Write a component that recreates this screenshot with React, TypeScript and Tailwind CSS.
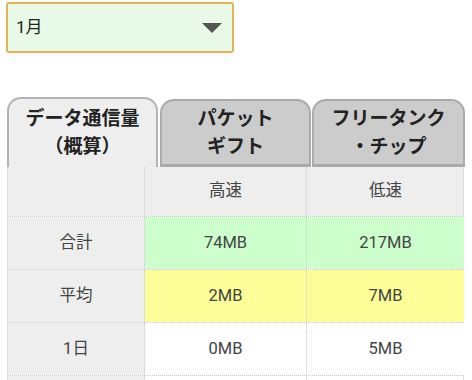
import React from "react";

const font = { fontFamily: "Roboto, 'Noto Sans CJK JP', 'Noto Sans', sans-serif" };

export default function App() {
  const rows = [
    { label: "合計", a: "74MB", b: "217MB", bg: "bg-[#ccffcc]" },
    { label: "平均", a: "2MB", b: "7MB", bg: "bg-[#ffff99]" },
    { label: "1日", a: "0MB", b: "5MB", bg: "bg-white" },
  ];
  return (
    <div className="w-[472px] h-[380px] overflow-hidden bg-white text-[#444]" style={font}>
      <div className="pt-[2px] pl-[6px]">
        <div className="w-[228px] h-[51px] border-2 border-[#e5b256] rounded-[3px] bg-[#e8f9e8] flex items-center justify-between pl-[8px] pr-[10px]">
          <span className="text-[17px] text-[#222]">1月</span>
          <svg width="20" height="10" viewBox="0 0 20 10">
            <polygon points="0,0 20,0 10,10" fill="#555" />
          </svg>
        </div>
      </div>
      <div className="mt-[44px] pl-[7px]">
        <div className="flex items-end">
          <div className="w-[151px] h-[70px] rounded-t-[14px] border-2 border-b-0 border-[#b4b4b4] bg-[#eeeeee] flex flex-col items-center justify-center font-bold text-[19px] leading-[28px] text-[#222]">
            <span>データ通信量</span>
            <span>（概算）</span>
          </div>
          <div className="ml-[2px] w-[151px] h-[68px] rounded-t-[14px] border-2 border-b-[3px] border-[#aaaaaa] bg-[#cccccc] flex flex-col items-center justify-center font-bold text-[19px] leading-[28px] text-[#222]">
            <span>パケット</span>
            <span>ギフト</span>
          </div>
          <div className="ml-[1px] w-[153px] h-[68px] rounded-t-[14px] border-2 border-b-[3px] border-[#aaaaaa] bg-[#cccccc] flex flex-col items-center justify-center font-bold text-[19px] leading-[28px] text-[#222]">
            <span>フリータンク</span>
            <span>・チップ</span>
          </div>
        </div>
        <div className="w-[457px] border-l border-r border-[#dddddd] text-[16.5px]">
          <div className="grid grid-cols-[137px_162px_157px] h-[49px] bg-[#eeeeee]">
            <div className="border-r border-dotted border-[#cccccc]" />
            <div className="flex items-center justify-center border-r border-dotted border-[#cccccc]">高速</div>
            <div className="flex items-center justify-center">低速</div>
          </div>
          {rows.map((r) => (
            <div key={r.label} className="grid grid-cols-[137px_162px_157px] h-[53px] border-t border-dotted border-[#c8c8c8]">
              <div className="flex items-center justify-center bg-[#eeeeee] border-r border-dotted border-[#cccccc]">{r.label}</div>
              <div className={`flex items-center justify-center ${r.bg} border-r border-dotted border-[#cccccc]`}>{r.a}</div>
              <div className={`flex items-center justify-center ${r.bg}`}>{r.b}</div>
            </div>
          ))}
          <div className="grid grid-cols-[137px_162px_157px] h-[20px] border-t border-dotted border-[#c8c8c8]">
            <div className="bg-[#eeeeee] border-r border-dotted border-[#cccccc]" />
            <div className="border-r border-dotted border-[#cccccc]" />
            <div />
          </div>
        </div>
      </div>
    </div>
  );
}
